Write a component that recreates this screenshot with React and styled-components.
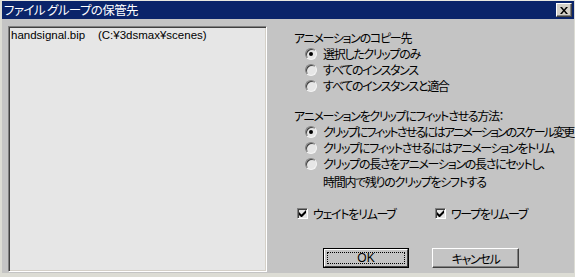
import React from "react";
import styled, { createGlobalStyle } from "styled-components";

const Global = createGlobalStyle`
  html, body { margin: 0; padding: 0; background: #c4c4c4; }
  body { width: 575px; height: 277px; overflow: hidden; }
  * { box-sizing: border-box; }
`;

const font = `"Noto Sans CJK JP", "Liberation Sans", sans-serif`;

const Window = styled.div`
  width: 575px;
  height: 277px;
  display: flex;
  flex-direction: column;
  background: #c4c4c4;
  border-top: 1px solid #e8e8e0;
  border-left: 2px solid #dcdcd4;
  border-right: 1px solid #dcdcd4;
  border-bottom: 4px solid #dcdcd4;
  font-family: ${font};
  font-feature-settings: "palt";
  font-size: 12px;
  letter-spacing: -1.3px;
  color: #000;
  white-space: nowrap;
`;

const TitleBar = styled.div`
  height: 18px;
  flex: none;
  background: #0a246a;
  color: #fff;
  display: flex;
  align-items: center;
  justify-content: space-between;
  padding: 0 2px 0 2px;
  font-size: 12.5px;
  letter-spacing: -0.6px;
  line-height: 18px;
`;

const CloseBtn = styled.div`
  width: 16px;
  height: 14px;
  background: #d4d0c8;
  border-top: 1px solid #fff;
  border-left: 1px solid #fff;
  border-right: 1px solid #404040;
  border-bottom: 1px solid #404040;
  box-shadow: inset -1px -1px 0 #808080;
  display: flex;
  align-items: center;
  justify-content: center;
`;

const Body = styled.div`
  flex: 1;
  display: flex;
  padding: 7px 0 1px 6px;
`;

const ListBox = styled.div`
  width: 259px;
  height: 246px;
  flex: none;
  background: #e6e6e6;
  border-top: 1px solid #808080;
  border-left: 1px solid #808080;
  border-right: 1px solid #fff;
  border-bottom: 1px solid #fff;
  box-shadow: inset 1px 1px 0 #404040, inset -1px -1px 0 #d4d0c8;
  padding: 1px 2px;
  font-family: "Liberation Sans", sans-serif;
  font-size: 11.5px;
  letter-spacing: 0;
  line-height: 14px;
  white-space: pre;
`;

const Right = styled.div`
  flex: 1;
  min-width: 0;
  display: flex;
  flex-direction: column;
  padding: 4px 0 0 27px;
`;

const GroupLabel = styled.div`
  height: 16px;
  line-height: 16px;
  margin-top: ${(p) => p.$mt || 0}px;
`;

const RadioRow = styled.div`
  display: flex;
  align-items: center;
  height: 16px;
  padding-left: 11px;
  gap: 6px;
  line-height: 16px;
  letter-spacing: ${(p) => (p.$tight ? "-1.85px" : "inherit")};
`;

const RadioCircle = styled.span`
  position: relative;
  width: 12px;
  height: 12px;
  flex: none;
  border-radius: 50%;
  background: #e6e6e6;
  border-top: 1px solid #808080;
  border-left: 1px solid #808080;
  border-right: 1px solid #f4f4f4;
  border-bottom: 1px solid #f4f4f4;
  box-shadow: inset 1px 1px 0 #404040;
  &::after {
    content: "";
    display: ${(p) => (p.$on ? "block" : "none")};
    position: absolute;
    left: 3px;
    top: 3px;
    width: 4px;
    height: 4px;
    border-radius: 50%;
    background: #000;
  }
`;

const Continuation = styled.div`
  padding-left: 29px;
  margin-top: 2px;
  height: 16px;
  line-height: 16px;
`;

const CheckRow = styled.div`
  display: flex;
  margin-top: 15px;
  height: 16px;
  padding-left: 3px;
`;

const CheckItem = styled.div`
  display: flex;
  align-items: center;
  gap: 5px;
  width: ${(p) => p.$w}px;
`;

const CheckBox = styled.span`
  width: 11px;
  height: 11px;
  flex: none;
  background: #e6e6e6;
  border-top: 1px solid #808080;
  border-left: 1px solid #808080;
  border-right: 1px solid #fff;
  border-bottom: 1px solid #fff;
  box-shadow: inset 1px 1px 0 #404040;
  display: flex;
  align-items: center;
  justify-content: center;
`;

const ButtonRow = styled.div`
  display: flex;
  gap: 23px;
  margin-top: 27px;
  padding-left: 29px;
`;

const Button = styled.div`
  width: ${(p) => p.$w}px;
  height: 20px;
  display: flex;
  align-items: center;
  justify-content: center;
  background: #c4c4c4;
  border-top: 1px solid #fff;
  border-left: 1px solid #fff;
  border-right: 1px solid #404040;
  border-bottom: 1px solid #404040;
  box-shadow: inset -1px -1px 0 #808080;
`;

const DefaultButton = styled.div`
  width: ${(p) => p.$w}px;
  height: 20px;
  border: 1px solid #000;
  display: flex;
`;

const DefaultInner = styled.div`
  flex: 1;
  background: #c4c4c4;
  border-top: 1px solid #fff;
  border-left: 1px solid #fff;
  border-right: 1px solid #404040;
  border-bottom: 1px solid #404040;
  padding: 2px;
  display: flex;
`;

const Focus = styled.div`
  flex: 1;
  border: 1px dotted #000;
  display: flex;
  align-items: center;
  justify-content: center;
  font-family: "Liberation Sans", sans-serif;
  font-size: 12px;
  letter-spacing: 0;
`;

const Check = () => (
  <svg width="7" height="7" viewBox="0 0 7 7">
    <path d="M0 2v3l2 2h1l4-4V0L2.5 4.5z" fill="#000" />
  </svg>
);

const Radio = ({ on, tight, children }) => (
  <RadioRow $tight={tight}>
    <RadioCircle $on={on} />
    <span>{children}</span>
  </RadioRow>
);

export default function App() {
  return (
    <>
      <Global />
      <Window>
        <TitleBar>
          <span>ファイル グループの保管先</span>
          <CloseBtn>
            <svg width="8" height="7" viewBox="0 0 8 7">
              <path d="M0 0h2l2 2.5L6 0h2L5 3.5 8 7H6L4 4.5 2 7H0l3-3.5z" fill="#000" />
            </svg>
          </CloseBtn>
        </TitleBar>
        <Body>
          <ListBox>{"handsignal.bip    (C:¥3dsmax¥scenes)"}</ListBox>
          <Right>
            <GroupLabel $mt={0}>アニメーションのコピー先</GroupLabel>
            <Radio on>選択したクリップのみ</Radio>
            <Radio>すべてのインスタンス</Radio>
            <Radio>すべてのインスタンスと適合</Radio>
            <GroupLabel $mt={14}>アニメーションをクリップにフィットさせる方法：</GroupLabel>
            <Radio on tight>クリップにフィットさせるにはアニメーションのスケール変更</Radio>
            <Radio>クリップにフィットさせるにはアニメーションをトリム</Radio>
            <Radio>クリップの長さをアニメーションの長さにセットし、</Radio>
            <Continuation>時間内で残りのクリップをシフトする</Continuation>
            <CheckRow>
              <CheckItem $w={138}>
                <CheckBox><Check /></CheckBox>
                <span>ウェイトをリムーブ</span>
              </CheckItem>
              <CheckItem $w={120}>
                <CheckBox><Check /></CheckBox>
                <span>ワープをリムーブ</span>
              </CheckItem>
            </CheckRow>
            <ButtonRow>
              <DefaultButton $w={86}>
                <DefaultInner>
                  <Focus>OK</Focus>
                </DefaultInner>
              </DefaultButton>
              <Button $w={87}>キャンセル</Button>
            </ButtonRow>
          </Right>
        </Body>
      </Window>
    </>
  );
}
